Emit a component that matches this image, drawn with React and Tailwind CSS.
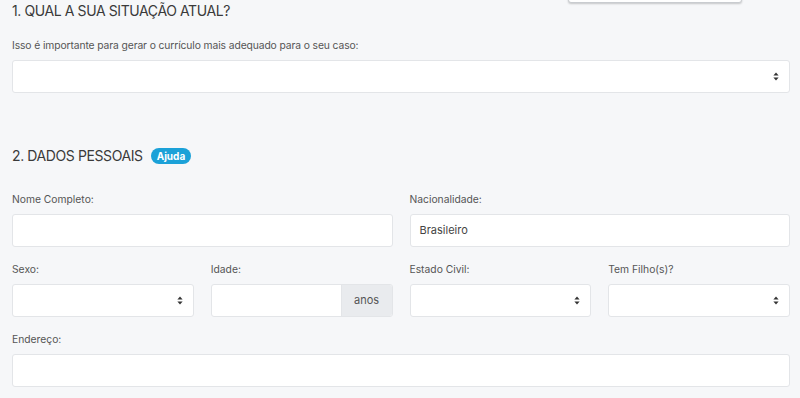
const Arrows = () => (
  <svg width="6" height="9" viewBox="0 0 6 9" className="shrink-0">
    <path d="M3 0.5 L5.6 3.6 H0.4 Z" fill="#333" />
    <path d="M3 8.5 L5.6 5.4 H0.4 Z" fill="#333" />
  </svg>
);

const Label = ({ children, className = '' }) => (
  <div className={`text-[10.3px] leading-[14px] text-[#555] mb-2 ${className}`}>{children}</div>
);

const Box = ({ children, className = '' }) => (
  <div className={`h-[33px] bg-white border border-[#e3e5e8] rounded-[3px] flex items-center ${className}`}>
    {children}
  </div>
);

const Select = () => (
  <Box className="justify-end pr-[10px]">
    <Arrows />
  </Box>
);

const Field = ({ label, children, className = '' }) => (
  <div className={className}>
    <Label>{label}</Label>
    {children}
  </div>
);

const App = () => {
  return (
    <div
      className="relative w-[800px] h-[398px] overflow-hidden bg-[#f6f7f9] px-[12px] pt-[2px] text-[#333]"
      style={{ fontFamily: 'Inter, "Noto Sans", sans-serif' }}
    >
      {/* floating card edge at the top */}
      <div className="absolute left-[568px] top-[-20px] w-[174px] h-[23px] bg-white border border-[#c9ccd0] rounded-[3px] shadow-[0_1px_2px_rgba(0,0,0,0.2)]" />

      {/* Section 1 */}
      <h2 className="text-[14px] leading-[18px] font-normal tracking-[-0.4px] text-[#3a3a3a]">1. QUAL A SUA SITUAÇÃO ATUAL?</h2>
      <div className="mt-[18px] mr-[-2px]">
        <Label className="tracking-[-0.1px]">Isso é importante para gerar o currículo mais adequado para o seu caso:</Label>
        <Select />
      </div>

      {/* Section 2 */}
      <div className="mt-[54px] flex items-center gap-[8px]">
        <h2 className="text-[14px] leading-[18px] font-normal tracking-[-0.4px] text-[#3a3a3a]">2. DADOS PESSOAIS</h2>
        <span className="h-[16px] px-[6px] rounded-full bg-[#1ba1d8] text-white text-[10px] font-bold leading-[16px]">Ajuda</span>
      </div>

      <div className="mt-[27px] mr-[-2px] grid grid-cols-4 gap-x-[17px] gap-y-[15px]">
        <Field label="Nome Completo:" className="col-span-2">
          <Box />
        </Field>
        <Field label="Nacionalidade:" className="col-span-2">
          <Box className="px-[9px] text-[11px] text-[#444]">Brasileiro</Box>
        </Field>

        <Field label="Sexo:">
          <Select />
        </Field>
        <Field label="Idade:">
          <Box className="overflow-hidden">
            <div className="flex-1" />
            <div className="w-[51px] h-full bg-[#e9ebee] border-l border-[#e3e5e8] flex items-center justify-center text-[11px] text-[#555]">
              anos
            </div>
          </Box>
        </Field>
        <Field label="Estado Civil:">
          <Select />
        </Field>
        <Field label="Tem Filho(s)?">
          <Select />
        </Field>

        <Field label="Endereço:" className="col-span-4">
          <Box />
        </Field>
      </div>
    </div>
  );
};

export default App;
